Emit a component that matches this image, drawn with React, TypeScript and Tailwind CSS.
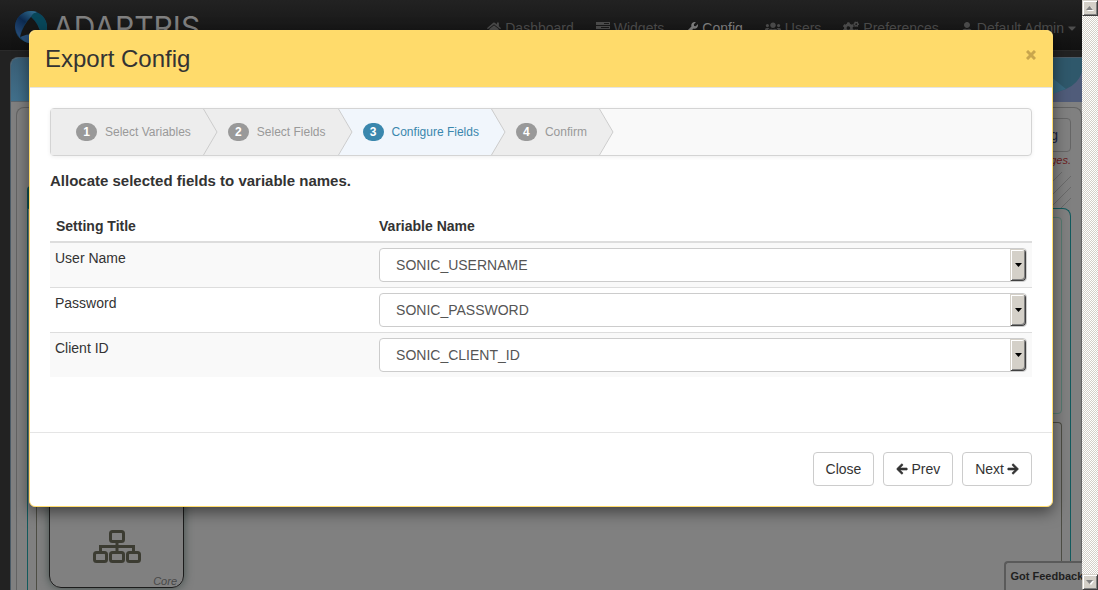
import React from "react";
import {
  FaArrowLeft,
  FaArrowRight,
  FaCaretDown,
  FaCogs,
  FaHome,
  FaUser,
  FaUsers,
  FaWrench,
} from "react-icons/fa";

const steps = ["Select Variables", "Select Fields", "Configure Fields", "Confirm"];
const current = 2;

const settings = [
  { title: "User Name", variable: "SONIC_USERNAME" },
  { title: "Password", variable: "SONIC_PASSWORD" },
  { title: "Client ID", variable: "SONIC_CLIENT_ID" },
];

function WidgetsIcon() {
  return (
    <svg viewBox="0 0 14 12" className="h-3 w-3.5" fill="currentColor" aria-hidden="true">
      <path
        fillRule="evenodd"
        d="M0 0h14v3H0zM8 1v1h5V1zM0 4h14v3H0zM5 5v1h8V5zM0 8h14v3H0zM10 9v1h3V9z"
      />
    </svg>
  );
}

function Globe() {
  return (
    <svg viewBox="0 0 32 32" className="size-8" aria-hidden="true">
      <defs>
        <linearGradient id="ring" x1="0" y1="0" x2="1" y2="1">
          <stop offset="0" stopColor="#0b2c55" />
          <stop offset="0.5" stopColor="#14405f" />
          <stop offset="1" stopColor="#176070" />
        </linearGradient>
        <linearGradient id="left" x1="0.8" y1="0" x2="0.2" y2="1">
          <stop offset="0" stopColor="#2f6a8c" />
          <stop offset="0.45" stopColor="#0c2a50" />
          <stop offset="1" stopColor="#2a4f7c" />
        </linearGradient>
      </defs>
      <circle cx="16" cy="16" r="16" fill="url(#ring)" />
      <path d="M22 1Q16-1 10 1Q0 6 0 16Q1 22 5 27Q6 14 16 6Q18 3 22 1Z" fill="url(#left)" />
      <path d="M17 4Q19 1 23 2Q32 7 32 17Q31 23 27 26Q25 13 16 6Z" fill="#08475a" />
      <path d="M5 25Q15 21 28 24Q23 32 14 32Q8 31 5 25Z" fill="#2a517b" />
      <path d="M16 6Q24 13 26 24Q15 21 5 26Q8 14 16 6Z" fill="#171717" />
    </svg>
  );
}

function NavItem({
  icon,
  label,
  active,
  caret,
}: {
  icon: React.ReactNode;
  label: string;
  active?: boolean;
  caret?: boolean;
}) {
  return (
    <a
      href="#"
      className={
        active
          ? "flex items-center gap-1 text-[#808080]"
          : "flex items-center gap-1 text-[#4d4d4d]"
      }
    >
      {icon}
      <span>{label}</span>
      {caret && <FaCaretDown className="h-3.5 w-2" />}
    </a>
  );
}

function Navbar() {
  return (
    <header className="flex h-[51px] shrink-0 items-start justify-between border-b border-[#2a2a2a] bg-linear-to-b from-[#222222] to-[#111111] pr-1.5 pl-[15px]">
      <a href="#" className="flex items-center gap-1.5 pt-[11px]">
        <Globe />
        <span className="font-['Inter'] text-[30px] leading-8 text-[#808080]">ADAPTRIS</span>
      </a>
      <nav className="flex gap-[22px] pt-[18px] text-[14px] leading-5">
        <NavItem icon={<FaHome className="size-3.5" />} label="Dashboard" />
        <NavItem icon={<WidgetsIcon />} label="Widgets" />
        <NavItem icon={<FaWrench className="size-3" />} label="Config" active />
        <NavItem icon={<FaUsers className="size-4" />} label="Users" />
        <NavItem icon={<FaCogs className="size-4" />} label="Preferences" />
        <NavItem icon={<FaUser className="size-3" />} label="Default Admin" caret />
      </nav>
    </header>
  );
}

function SitemapIcon() {
  return (
    <svg
      viewBox="0 0 48 34"
      className="h-[34px] w-12"
      fill="none"
      stroke="#3c3c32"
      strokeWidth="3"
      aria-hidden="true"
    >
      <rect x="17.5" y="1.5" width="13" height="10" rx="2" />
      <rect x="1.5" y="22.5" width="12" height="9" rx="2" />
      <rect x="17.5" y="22.5" width="13" height="9" rx="2" />
      <rect x="34.5" y="22.5" width="12" height="9" rx="2" />
      <path d="M24 12v10M7.500 22v-5.500h33V22" />
    </svg>
  );
}

function Workspace() {
  return (
    <main className="mt-1.5 ml-2.5 flex flex-1 flex-col overflow-hidden rounded-tl-lg border-t border-l border-[#4a5a66] bg-[#808080]">
      <div className="flex h-11 shrink-0 justify-end border-b border-[#5d666e] bg-linear-to-b from-[#3a5f76] to-[#41708c]">
        <svg viewBox="0 0 60 44" className="h-11 w-15" aria-hidden="true">
          <path d="M0 0h60v44H0z" fill="#505c7a" />
          <path d="M0 0h60v14Q56 26 44 31Q28 36 20 40H0z" fill="#2f586b" />
          <path d="M0 44V0L20 10Q32 22 44 31Q32 34 20 44z" fill="#376880" />
        </svg>
      </div>
      <div className="flex flex-1 flex-col pt-[5px] pl-[5px]">
        <section className="flex flex-1 flex-col rounded-t-lg border border-b-0 border-[#636363] pt-2.5 pr-2.5 pl-2.5">
          <div className="flex flex-col items-end">
            <button
              type="button"
              className="h-[34px] rounded border border-[#666666] px-3 text-[14px] text-[#1b2540]"
            >
              Config
            </button>
            <em className="text-[11px] leading-4 text-[#6b1c1c]">changes.</em>
          </div>
          <div className="mt-1 flex h-9 items-end justify-between">
            <div className="h-[22px] w-24 rounded-t bg-[#0e5053]" />
            <svg viewBox="0 0 40 36" className="h-9 w-10" stroke="#6a6a6a" aria-hidden="true">
              <path d="M0 31L31 0M0 44L40 4M7 48L40 15M18 48L40 26" />
            </svg>
          </div>
          <div className="flex flex-1 flex-col gap-2 rounded-tr-lg border border-b-0 border-[#125a5d] px-2 pt-2">
            <div className="h-[197px] rounded border border-[#567a70]" />
            <div className="flex-1 rounded-t border border-b-0 border-[#4d4d44] px-3 pt-[30px]">
              <article className="flex h-[135px] w-[135px] flex-col items-center justify-end rounded-xl border border-[#1c1c1c] shadow-[0_0_10px_rgba(40,60,55,0.7)]">
                <SitemapIcon />
                <em className="mt-[11px] self-end pr-1.5 text-[11px] leading-3 text-[#484848]">
                  Core
                </em>
              </article>
            </div>
          </div>
        </section>
      </div>
    </main>
  );
}

function Wizard() {
  return (
    <ol className="flex h-12 rounded border border-[#d4d4d4] bg-[#f9f9f9] shadow-[0_1px_4px_rgba(0,0,0,0.065)]">
      {steps.map((step, i) => (
        <li
          key={step}
          aria-current={i === current ? "step" : undefined}
          className={
            i === current
              ? "relative flex items-center gap-2 bg-[#f1f6fc] pr-3 pl-[25px] text-[#3a87ad]"
              : "relative flex items-center gap-2 bg-[#ededed] pr-3 pl-[25px] text-[#999999]"
          }
        >
          <span
            className={
              i === current
                ? "flex h-[18px] w-[21px] items-center justify-center rounded-full bg-[#3a87ad] text-[12px] leading-[18px] font-bold text-white"
                : "flex h-[18px] w-[21px] items-center justify-center rounded-full bg-[#999999] text-[12px] leading-[18px] font-bold text-white"
            }
          >
            {i + 1}
          </span>
          <span className="text-[12px] leading-4">{step}</span>
          <svg
            viewBox="0 0 15 46"
            className="absolute top-0 left-full z-10 h-full w-[15px]"
            aria-hidden="true"
          >
            <path d="M0 0L14 23L0 46z" fill={i === current ? "#f1f6fc" : "#ededed"} />
            <path d="M0.500 0L14 23L0.500 46" fill="none" stroke="#cccccc" />
          </svg>
        </li>
      ))}
    </ol>
  );
}

function SelectField({ id, value }: { id: string; value: string }) {
  return (
    <div className="relative">
      <select
        id={id}
        defaultValue={value}
        className="block h-[34px] w-full appearance-none rounded border border-[#cccccc] bg-white pr-6 pl-4 text-[14px] text-[#555555]"
      >
        {settings.map((s) => (
          <option key={s.variable}>{s.variable}</option>
        ))}
      </select>
      <span className="pointer-events-none absolute inset-y-px right-px flex w-4 items-center justify-center rounded-r-sm border border-t-[#d4d0c8] border-r-[#404040] border-b-[#404040] border-l-[#d4d0c8] bg-[#d4d0c8] shadow-[inset_1px_1px_0_#ffffff,inset_-1px_-1px_0_#808080]">
        <svg viewBox="0 0 7 4" className="h-1 w-[7px]" aria-hidden="true">
          <path d="M0 0h7L3.500 4z" fill="#000000" />
        </svg>
      </span>
    </div>
  );
}

function DialogButton({ children }: { children: React.ReactNode }) {
  return (
    <button
      type="button"
      className="flex h-[34px] items-center gap-[3px] rounded border border-[#cccccc] bg-white px-3 text-[14px] text-[#333333]"
    >
      {children}
    </button>
  );
}

function ExportDialog() {
  return (
    <div
      role="dialog"
      aria-labelledby="dialog-title"
      className="overflow-hidden rounded-md border border-[#ffdb6b] bg-white text-[14px] text-[#333333] shadow-[0_5px_15px_rgba(0,0,0,0.5)]"
    >
      <div className="flex h-[57px] items-start justify-between border-b border-[#e5e5e5] bg-[#ffdb6b] px-[15px] pt-[15px]">
        <h1 id="dialog-title" className="text-[24px] leading-[26px]">
          Export Config
        </h1>
        <button
          type="button"
          aria-label="Close dialog"
          className="flex h-[18px] w-3 items-center justify-center text-[#c9a64d]"
        >
          <svg
            viewBox="0 0 10 10"
            className="size-2.5"
            stroke="currentColor"
            strokeWidth="3"
            aria-hidden="true"
          >
            <path d="M1 1L9 9M9 1L1 9" />
          </svg>
        </button>
      </div>
      <div className="px-5 pt-5 pb-[55px]">
        <Wizard />
        <p className="mt-[15px] text-[15px] leading-5 font-bold">
          Allocate selected fields to variable names.
        </p>
        <table className="mt-5 w-full table-fixed border-collapse">
          <thead>
            <tr className="border-b-2 border-[#dddddd] text-left">
              <th className="w-[33%] px-1.5 py-[5px] leading-5">Setting Title</th>
              <th className="px-[5px] py-[5px] leading-5">Variable Name</th>
            </tr>
          </thead>
          <tbody>
            {settings.map((s) => (
              <tr key={s.title} className="border-t border-[#dddddd] odd:bg-[#f9f9f9]">
                <td className="p-[5px] align-top leading-5">
                  <label htmlFor={s.variable}>{s.title}</label>
                </td>
                <td className="p-[5px]">
                  <SelectField id={s.variable} value={s.variable} />
                </td>
              </tr>
            ))}
          </tbody>
        </table>
      </div>
      <div className="flex justify-end gap-[9px] border-t border-[#e5e5e5] px-5 pt-[19px] pb-5">
        <DialogButton>Close</DialogButton>
        <DialogButton>
          <FaArrowLeft className="size-3" stroke="currentColor" strokeWidth="30" />
          Prev
        </DialogButton>
        <DialogButton>
          Next
          <FaArrowRight className="size-3" stroke="currentColor" strokeWidth="30" />
        </DialogButton>
      </div>
    </div>
  );
}

function ScrollArrow({ up }: { up?: boolean }) {
  return (
    <button
      type="button"
      aria-label={up ? "Scroll up" : "Scroll down"}
      className="flex size-4 items-center justify-center border border-[#404040] border-t-[#d4d0c8] border-l-[#d4d0c8] bg-[#d4d0c8] shadow-[inset_1px_1px_0_#ffffff,inset_-1px_-1px_0_#808080]"
    >
      <svg viewBox="0 0 8 5" className="h-[5px] w-2" aria-hidden="true">
        <path d={up ? "M1 5L5 1L8 5z" : "M1 1h7L5 5z"} fill="#ffffff" />
        <path d={up ? "M0 4L3.500 0L7 4z" : "M0 0h7L3.500 4z"} fill="#808080" />
      </svg>
    </button>
  );
}

export default function App() {
  return (
    <div className="flex h-screen overflow-hidden bg-[#222222] font-['Liberation_Sans',Arial,sans-serif]">
      <div className="relative flex min-w-0 flex-1 flex-col overflow-hidden">
        <Navbar />
        <Workspace />
        <div className="absolute inset-0 px-[29px] pt-[30px]">
          <ExportDialog />
        </div>
        <a
          href="#"
          className="absolute -right-3 bottom-0 h-[29px] rounded-tl-sm border-t-2 border-l-2 border-[#5a5a5a] bg-[#808080] pr-1 pl-[5px] text-[11px] leading-[26px] font-bold whitespace-nowrap text-[#1f1f1f]"
        >
          Got Feedback?
        </a>
      </div>
      <div className="flex w-4 shrink-0 flex-col justify-between bg-[conic-gradient(#d4d0c8_25%,#ffffff_0_50%,#d4d0c8_0_75%,#ffffff_0)] bg-[length:2px_2px]">
        <ScrollArrow up />
        <ScrollArrow />
      </div>
    </div>
  );
}
